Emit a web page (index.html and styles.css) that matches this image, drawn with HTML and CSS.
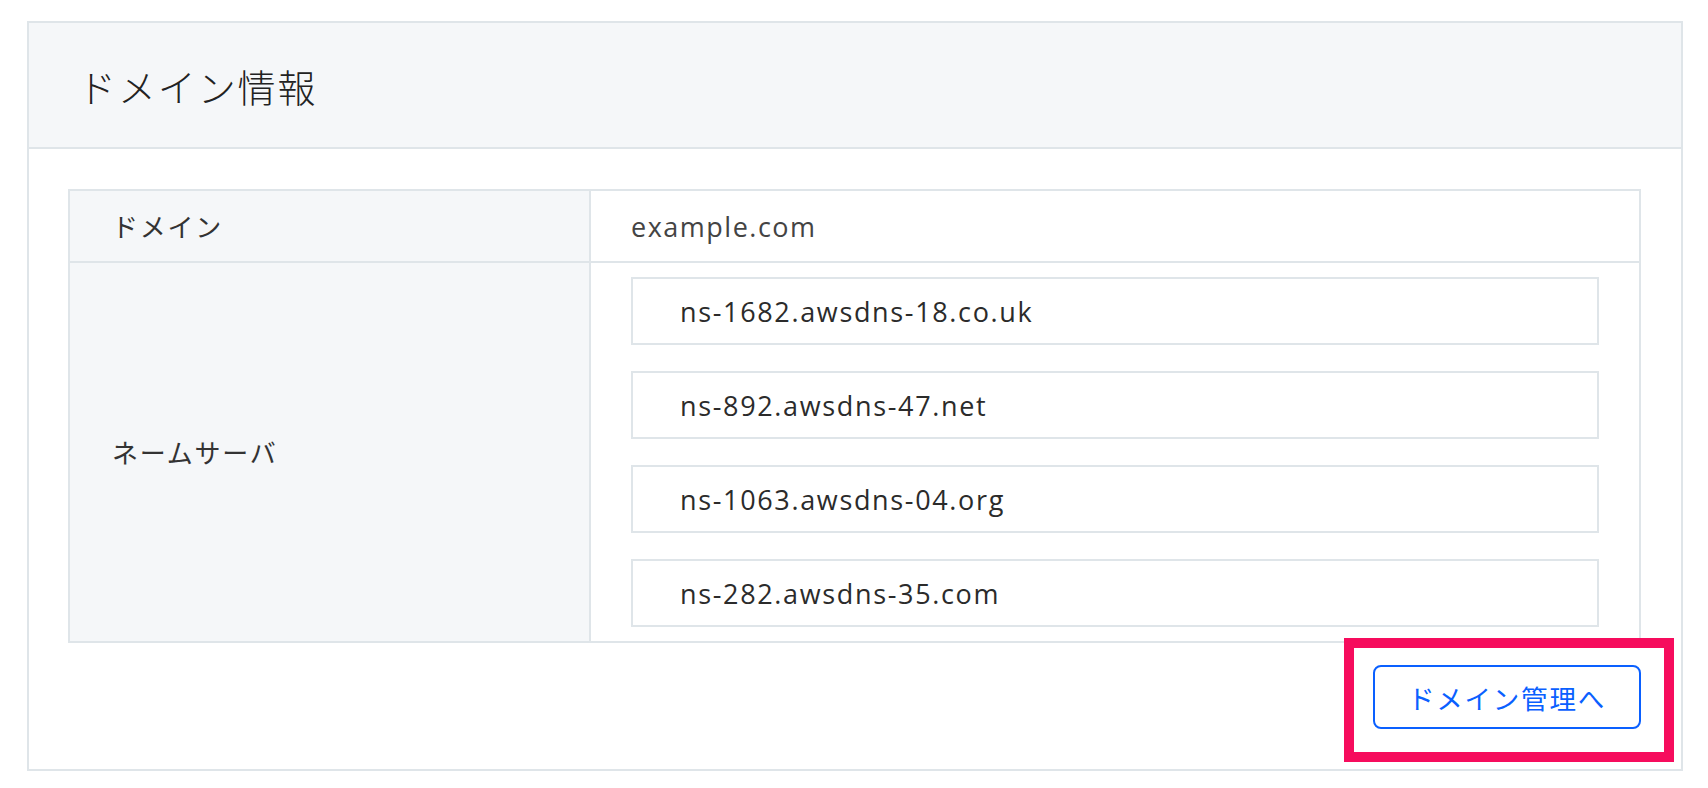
FILE: index.html
```html
<!DOCTYPE html>
<html lang="ja">
<head>
<meta charset="utf-8">
<title>ドメイン情報</title>
<link rel="stylesheet" href="styles.css">
</head>
<body>
<div class="page">
  <section class="card">
    <header class="card-header">
      <h1 class="card-title">ドメイン情報</h1>
    </header>
    <div class="card-body">
      <div class="info-table">
        <div class="row">
          <div class="label">ドメイン</div>
          <div class="value value-text">example.com</div>
        </div>
        <div class="row">
          <div class="label">ネームサーバ</div>
          <div class="value value-list">
            <div class="ns-box">ns-1682.awsdns-18.co.uk</div>
            <div class="ns-box">ns-892.awsdns-47.net</div>
            <div class="ns-box">ns-1063.awsdns-04.org</div>
            <div class="ns-box">ns-282.awsdns-35.com</div>
          </div>
        </div>
      </div>
      <div class="actions">
        <div class="highlight-wrap">
          <a class="btn-outline" href="#">ドメイン管理へ</a>
          <span class="highlight"></span>
        </div>
      </div>
    </div>
  </section>
</div>
</body>
</html>
```

FILE: styles.css
```css
* { box-sizing: border-box; }

html, body {
  margin: 0;
  background: #ffffff;
}

body {
  font-family: "Open Sans", "Noto Sans CJK JP", sans-serif;
  color: #333333;
  letter-spacing: 0.11em;
}

.page {
  padding: 21px 25px 0 27px;
}

.card {
  border: 2px solid #dfe5e9;
  background: #ffffff;
}

.card-header {
  height: 126px;
  background: #f5f7f9;
  border-bottom: 2px solid #dfe5e9;
  display: flex;
  align-items: center;
  padding-left: 49px;
  padding-top: 4px;
}

.card-title {
  margin: 0;
  font-weight: 300;
  font-size: 38px;
  letter-spacing: 0.05em;
  color: #222222;
  line-height: 1;
}

.card-body {
  padding: 40px 40px 40px 39px;
}

.info-table {
  border: 2px solid #dfe5e9;
}

.row {
  display: grid;
  grid-template-columns: 521px 1fr;
}

.row + .row {
  border-top: 2px solid #dfe5e9;
}

.label {
  background: #f5f7f9;
  border-right: 2px solid #dfe5e9;
  display: flex;
  align-items: center;
  padding-left: 42px;
  font-size: 26px;
  color: #333333;
}

.value {
  padding: 0 40px;
}

.value-text {
  height: 70px;
  display: flex;
  align-items: center;
  font-size: 27px;
  letter-spacing: 1.5px;
  color: #444444;
}

.value-list {
  padding-top: 14px;
  padding-bottom: 14px;
  display: flex;
  flex-direction: column;
  gap: 26px;
}

.ns-box {
  height: 68px;
  border: 2px solid #dfe5e9;
  display: flex;
  align-items: center;
  padding-left: 47px;
  font-size: 27px;
  letter-spacing: 1.65px;
  color: #2b2b2b;
}

.actions {
  display: flex;
  justify-content: flex-end;
  padding-top: 22px;
}

.highlight-wrap {
  position: relative;
  display: flex;
}

.btn-outline {
  width: 268px;
  height: 64px;
  border: 2px solid #0a60ff;
  border-radius: 8px;
  display: flex;
  align-items: center;
  justify-content: center;
  font-size: 26.5px;
  color: #0a60ff;
  text-decoration: none;
  background: #ffffff;
}

.highlight {
  position: absolute;
  left: -29px;
  top: -27px;
  right: -33px;
  bottom: -33px;
  border: 10px solid #f60c5d;
  pointer-events: none;
}
```
